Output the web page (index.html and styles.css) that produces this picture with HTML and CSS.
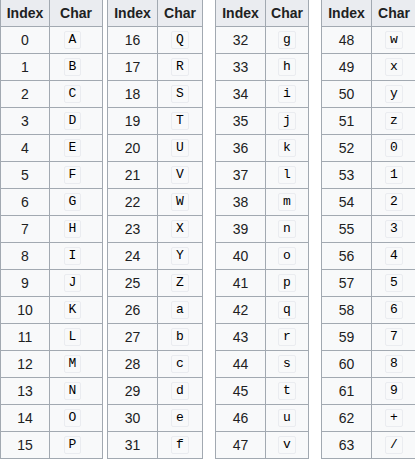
FILE: index.html
```html
<!DOCTYPE html>
<html>
<head>
<meta charset="utf-8">
<link rel="stylesheet" href="styles.css">
</head>
<body>
<div class="tables">
<table class="t t1">
<colgroup><col class="ci1"><col class="cc1"></colgroup>
<tr><th>Index</th><th>Char</th></tr>
<tr><td>0</td><td class="ch"><code>A</code></td></tr>
<tr><td>1</td><td class="ch"><code>B</code></td></tr>
<tr><td>2</td><td class="ch"><code>C</code></td></tr>
<tr><td>3</td><td class="ch"><code>D</code></td></tr>
<tr><td>4</td><td class="ch"><code>E</code></td></tr>
<tr><td>5</td><td class="ch"><code>F</code></td></tr>
<tr><td>6</td><td class="ch"><code>G</code></td></tr>
<tr><td>7</td><td class="ch"><code>H</code></td></tr>
<tr><td>8</td><td class="ch"><code>I</code></td></tr>
<tr><td>9</td><td class="ch"><code>J</code></td></tr>
<tr><td>10</td><td class="ch"><code>K</code></td></tr>
<tr><td>11</td><td class="ch"><code>L</code></td></tr>
<tr><td>12</td><td class="ch"><code>M</code></td></tr>
<tr><td>13</td><td class="ch"><code>N</code></td></tr>
<tr><td>14</td><td class="ch"><code>O</code></td></tr>
<tr><td>15</td><td class="ch"><code>P</code></td></tr>
</table>
<table class="t t2">
<colgroup><col class="ci2"><col class="cc2"></colgroup>
<tr><th>Index</th><th>Char</th></tr>
<tr><td>16</td><td class="ch"><code>Q</code></td></tr>
<tr><td>17</td><td class="ch"><code>R</code></td></tr>
<tr><td>18</td><td class="ch"><code>S</code></td></tr>
<tr><td>19</td><td class="ch"><code>T</code></td></tr>
<tr><td>20</td><td class="ch"><code>U</code></td></tr>
<tr><td>21</td><td class="ch"><code>V</code></td></tr>
<tr><td>22</td><td class="ch"><code>W</code></td></tr>
<tr><td>23</td><td class="ch"><code>X</code></td></tr>
<tr><td>24</td><td class="ch"><code>Y</code></td></tr>
<tr><td>25</td><td class="ch"><code>Z</code></td></tr>
<tr><td>26</td><td class="ch"><code>a</code></td></tr>
<tr><td>27</td><td class="ch"><code>b</code></td></tr>
<tr><td>28</td><td class="ch"><code>c</code></td></tr>
<tr><td>29</td><td class="ch"><code>d</code></td></tr>
<tr><td>30</td><td class="ch"><code>e</code></td></tr>
<tr><td>31</td><td class="ch"><code>f</code></td></tr>
</table>
<table class="t t3">
<colgroup><col class="ci3"><col class="cc3"></colgroup>
<tr><th>Index</th><th>Char</th></tr>
<tr><td>32</td><td class="ch"><code>g</code></td></tr>
<tr><td>33</td><td class="ch"><code>h</code></td></tr>
<tr><td>34</td><td class="ch"><code>i</code></td></tr>
<tr><td>35</td><td class="ch"><code>j</code></td></tr>
<tr><td>36</td><td class="ch"><code>k</code></td></tr>
<tr><td>37</td><td class="ch"><code>l</code></td></tr>
<tr><td>38</td><td class="ch"><code>m</code></td></tr>
<tr><td>39</td><td class="ch"><code>n</code></td></tr>
<tr><td>40</td><td class="ch"><code>o</code></td></tr>
<tr><td>41</td><td class="ch"><code>p</code></td></tr>
<tr><td>42</td><td class="ch"><code>q</code></td></tr>
<tr><td>43</td><td class="ch"><code>r</code></td></tr>
<tr><td>44</td><td class="ch"><code>s</code></td></tr>
<tr><td>45</td><td class="ch"><code>t</code></td></tr>
<tr><td>46</td><td class="ch"><code>u</code></td></tr>
<tr><td>47</td><td class="ch"><code>v</code></td></tr>
</table>
<table class="t t4">
<colgroup><col class="ci4"><col class="cc4"></colgroup>
<tr><th>Index</th><th>Char</th></tr>
<tr><td>48</td><td class="ch"><code>w</code></td></tr>
<tr><td>49</td><td class="ch"><code>x</code></td></tr>
<tr><td>50</td><td class="ch"><code>y</code></td></tr>
<tr><td>51</td><td class="ch"><code>z</code></td></tr>
<tr><td>52</td><td class="ch"><code>0</code></td></tr>
<tr><td>53</td><td class="ch"><code>1</code></td></tr>
<tr><td>54</td><td class="ch"><code>2</code></td></tr>
<tr><td>55</td><td class="ch"><code>3</code></td></tr>
<tr><td>56</td><td class="ch"><code>4</code></td></tr>
<tr><td>57</td><td class="ch"><code>5</code></td></tr>
<tr><td>58</td><td class="ch"><code>6</code></td></tr>
<tr><td>59</td><td class="ch"><code>7</code></td></tr>
<tr><td>60</td><td class="ch"><code>8</code></td></tr>
<tr><td>61</td><td class="ch"><code>9</code></td></tr>
<tr><td>62</td><td class="ch"><code>+</code></td></tr>
<tr><td>63</td><td class="ch"><code>/</code></td></tr>
</table>
</div>
</body>
</html>
```
FILE: styles.css
```css
html, body {
  margin: 0;
  padding: 0;
  background: #ffffff;
}
body {
  font-family: "Liberation Sans", Arial, sans-serif;
  font-size: 14px;
  color: #202122;
  overflow: hidden;
}
.tables {
  display: flex;
  align-items: flex-start;
  margin-top: -1px;
  width: 430px;
}
.t {
  border-collapse: collapse;
  table-layout: fixed;
  background: #f8f9fa;
  flex: none;
}
.t1 { width: 103px; }
.t2 { width: 96px; margin-left: 4px; }
.t3 { width: 94px; margin-left: 12px; }
.t4 { width: 96px; margin-left: 12px; }
.ci1 { width: 49px; } .cc1 { width: 53px; }
.ci2 { width: 50px; } .cc2 { width: 45px; }
.ci3 { width: 50px; } .cc3 { width: 43px; }
.ci4 { width: 50px; } .cc4 { width: 45px; }
.t th, .t td {
  border: 1px solid #a2a9b1;
  height: 26px;
  padding: 0;
  text-align: center;
  vertical-align: middle;
  line-height: 16px;
}
.t th {
  background: #eaecf0;
  font-weight: bold;
}
.t1 .ch { padding-right: 7px; }
code {
  display: inline-block;
  font-family: "Liberation Mono", "Courier New", monospace;
  font-size: 13px;
  line-height: 14px;
  padding: 1px 4px;
  background: #f8f9fa;
  border: 1px solid #eaecf0;
  border-radius: 2px;
  color: #000;
  vertical-align: middle;
}
```
